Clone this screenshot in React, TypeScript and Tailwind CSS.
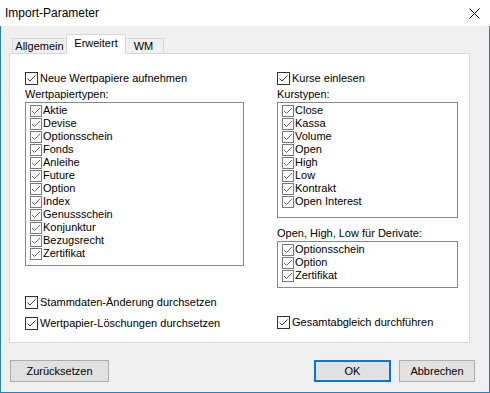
import React from "react";

const font = { fontFamily: '"Liberation Sans", Arial, sans-serif' };

function Check({ light = false }: { light?: boolean }) {
  if (light) {
    return (
      <svg width="12" height="12" viewBox="0 0 12 12" className="shrink-0">
        <rect x="0.5" y="0.5" width="11" height="11" fill="#fff" stroke="#7a7a7a" />
        <path d="M2 6 L4.5 8.5 L10 3" fill="none" stroke="#666" strokeWidth="1" />
      </svg>
    );
  }
  return (
    <svg width="13" height="13" viewBox="0 0 13 13" className="shrink-0">
      <rect x="0.5" y="0.5" width="12" height="12" fill="#fff" stroke="#333" />
      <path d="M2.5 6.5 L5 9 L10.5 3.5" fill="none" stroke="#333" strokeWidth="1" />
    </svg>
  );
}

function CheckRow({ label, className = "" }: { label: string; className?: string }) {
  return (
    <div className={`flex items-center h-[13px] gap-[2px] ${className}`}>
      <Check />
      <span className="leading-[13px] whitespace-nowrap">{label}</span>
    </div>
  );
}

function ListBox({ items, height }: { items: string[]; height: string }) {
  return (
    <div className={`mt-[1px] border border-[#828790] bg-white pt-[1px] pl-[4px] ${height}`}>
      {items.map((it) => (
        <div key={it} className="flex items-center h-[13px] gap-[1px]">
          <Check light />
          <span className="leading-[13px] whitespace-nowrap">{it}</span>
        </div>
      ))}
    </div>
  );
}

const papiere = [
  "Aktie",
  "Devise",
  "Optionsschein",
  "Fonds",
  "Anleihe",
  "Future",
  "Option",
  "Index",
  "Genussschein",
  "Konjunktur",
  "Bezugsrecht",
  "Zertifikat",
];

const kurse = ["Close", "Kassa", "Volume", "Open", "High", "Low", "Kontrakt", "Open Interest"];

export default function App() {
  return (
    <div className="w-[490px] h-[393px] flex flex-col bg-[#f0f0f0] text-black text-[11px]" style={font}>
      {/* title bar */}
      <div className="h-[26px] bg-white flex items-center justify-between pl-[5px] pr-[10px]">
        <span className="text-[12px] leading-[14px]">Import-Parameter</span>
        <svg width="11" height="11" viewBox="0 0 11 11">
          <path d="M0.5 0.5 L10.5 10.5 M10.5 0.5 L0.5 10.5" stroke="#000" strokeWidth="1" />
        </svg>
      </div>

      <div className="flex-1 flex flex-col border-x border-b border-[#1883d7]">
        {/* tabs */}
        <div className="mt-[8px] pl-[11px] h-[20px] flex items-end">
          <div className="w-[54px] h-[16px] border-l border-t border-[#d9d9d9] flex items-center justify-center pb-[1px]">
            Allgemein
          </div>
          <div className="relative z-10 w-[60px] h-[20px] bg-white border-x border-t border-[#d9d9d9] flex items-center justify-center pb-[2px]">
            Erweitert
          </div>
          <div className="w-[38px] h-[16px] border-r border-t border-[#d9d9d9] flex items-center justify-center pb-[1px] pr-[2px]">
            WM
          </div>
        </div>

        {/* panel */}
        <div className="-mt-px ml-[8px] w-[461px] h-[290px] bg-white border border-[#d9d9d9] pt-[18px] pl-[15px]">
          <div className="flex">
            <div className="w-[219px]">
              <CheckRow label="Neue Wertpapiere aufnehmen" />
              <div className="mt-[2px] h-[14px] leading-[14px]">Wertpapiertypen:</div>
              <ListBox items={papiere} height="h-[164px]" />
            </div>
            <div className="ml-[33px] w-[181px]">
              <CheckRow label="Kurse einlesen" />
              <div className="mt-[2px] h-[14px] leading-[14px]">Kurstypen:</div>
              <ListBox items={kurse} height="h-[116px]" />
              <div className="mt-[8px] h-[14px] leading-[14px]">Open, High, Low für Derivate:</div>
              <ListBox items={["Optionsschein", "Option", "Zertifikat"]} height="h-[47px]" />
            </div>
          </div>
          <CheckRow label="Stammdaten-Änderung durchsetzen" className="mt-[8px]" />
          <div className="flex mt-[8px]">
            <CheckRow label="Wertpapier-Löschungen durchsetzen" className="w-[252px]" />
            <CheckRow label="Gesamtabgleich durchführen" className="-mt-px" />
          </div>
        </div>

        {/* buttons */}
        <div className="mt-[17px] flex pl-[9px] pr-[14px]">
          <button className="w-[99px] h-[22px] bg-[#e1e1e1] border border-[#adadad] leading-[14px]">
            Zurücksetzen
          </button>
          <button className="ml-auto w-[77px] h-[22px] bg-[#e1e1e1] border-2 border-[#0078d7] leading-[14px]">
            OK
          </button>
          <button className="ml-[8px] w-[76px] h-[22px] bg-[#e1e1e1] border border-[#adadad] leading-[14px]">
            Abbrechen
          </button>
        </div>
      </div>
    </div>
  );
}
